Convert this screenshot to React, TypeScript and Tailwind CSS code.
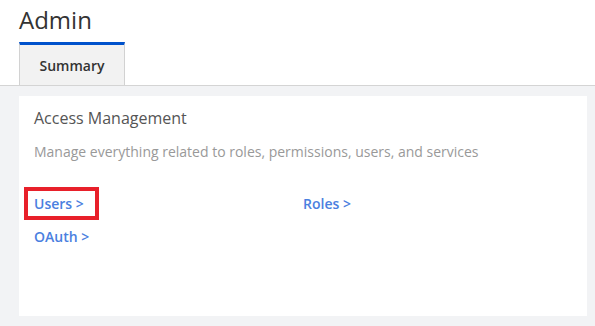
const links = [
  { label: 'Users >', highlighted: true },
  { label: 'Roles >', highlighted: false },
  { label: 'OAuth >', highlighted: false },
];

export default function App() {
  return (
    <div className="flex h-[326px] w-[595px] flex-col bg-white font-['Open_Sans',sans-serif]">
      <div className="px-[19px] pt-1">
        <h1 className="text-[24px] leading-8 font-normal text-[#333333]">Admin</h1>
        <div className="mt-[6px] flex">
          <div className="flex h-[43px] w-[106px] items-center justify-center border-x border-t-[3px] border-x-[#d2d2d2] border-t-[#0052cc] bg-[#f2f2f2] pt-[1px] text-[14px] font-semibold text-[#333333]">
            Summary
          </div>
        </div>
      </div>

      <div className="flex flex-1 flex-col border-t border-[#d4d4d4] bg-[#f2f3f5] pt-[10px] pr-2 pb-[10px] pl-[19px]">
        <div className="flex-1 bg-white px-[15px] pt-[10px]">
          <h2 className="text-[16px] leading-6 text-[#555555]">Access Management</h2>
          <p className="mt-3 text-[14px] leading-5 text-[#999999]">
            Manage everything related to roles, permissions, users, and services
          </p>
          <div className="mt-[31.5px] grid grid-cols-2 gap-y-[13px]">
            {links.map(link => (
              <div key={link.label} className="flex">
                <a className="relative text-[14px] leading-5 font-semibold text-[#4a80e0]">
                  {link.label}
                  {link.highlighted && (
                    <span className="absolute top-[-6.5px] bottom-[-6.5px] left-[-10px] right-[-15px] border-4 border-[#e8202a]" />
                  )}
                </a>
              </div>
            ))}
          </div>
        </div>
      </div>
    </div>
  );
}
